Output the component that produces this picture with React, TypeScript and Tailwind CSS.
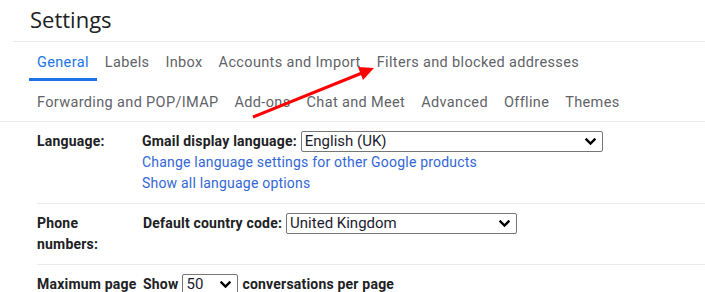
const Chevron = () => (
  <svg className="w-[11px] h-[8px]" viewBox="0 0 11 8" fill="none">
    <path d="M1.5 1.5 L5.5 5.5 L9.5 1.5" stroke="#000" strokeWidth={2.4} strokeLinecap="square" />
  </svg>
);

const FakeSelect = ({ value, width }: { value: string; width: string }) => (
  <div className={`${width} h-[21px] border border-[#767676] rounded-[2px] flex items-center justify-between pl-[3px] pr-[6px] text-[15px] tracking-normal text-[#1b1b2e] bg-white`}>
    <span className="leading-none">{value}</span>
    <Chevron />
  </div>
);

const row1 = ['General', 'Labels', 'Inbox', 'Accounts and Import', 'Filters and blocked addresses'];
const row2 = ['Forwarding and POP/IMAP', 'Add-ons', 'Chat and Meet', 'Advanced', 'Offline', 'Themes'];

export default function App() {
  return (
    <div className="relative w-[705px] h-[292px] overflow-hidden bg-white font-['Roboto',sans-serif] text-[14px] text-[#202124] tracking-[0.2px]">
      <div className="h-[41px] pl-[30px] pt-[4px] text-[22px] text-[#202124] font-['Open_Sans',sans-serif] leading-[30px] tracking-normal">
        Settings
      </div>
      <div className="ml-[13px] border-t border-[#e8e8e8]" />

      <div className="flex pl-[29px] h-[39px] text-[14.5px] tracking-[0.35px]">
        {row1.map((t, i) => (
          <div
            key={t}
            className={
              i === 0
                ? 'px-[8px] pt-[10px] text-[#1a73e8] border-b-[3px] border-[#1a73e8]'
                : 'px-[8px] pt-[10px] text-[#5f6368]'
            }
          >
            {t}
          </div>
        ))}
      </div>
      <div className="flex pl-[29px] h-[40px] pt-[11px] text-[14.5px] tracking-[0.35px]">
        {row2.map((t) => (
          <div key={t} className="px-[8px] text-[#5f6368]">
            {t}
          </div>
        ))}
      </div>
      <div className="border-t border-[#ebebeb]" />

      <div className="pl-[37px]">
        <div className="flex pt-[9px] h-[82px] border-b border-[#ebebeb]">
          <div className="w-[105px] font-bold leading-[21px]">Language:</div>
          <div className="flex flex-col">
            <div className="flex items-center gap-[4px]">
              <span className="font-bold">Gmail display language:</span>
              <FakeSelect value="English (UK)" width="w-[302px]" />
            </div>
            <div className="leading-[21px] text-[#3367d6]">Change language settings for other Google products</div>
            <div className="leading-[21px] text-[#3367d6]">Show all language options</div>
          </div>
        </div>

        <div className="flex pt-[9px] h-[61px] border-b border-[#ebebeb]">
          <div className="w-[106px] font-bold leading-[21px]">
            Phone
            <br />
            numbers:
          </div>
          <div className="flex items-start gap-[4px]">
            <span className="font-bold leading-[21px]">Default country code:</span>
            <FakeSelect value="United Kingdom" width="w-[231px]" />
          </div>
        </div>

        <div className="flex pt-[9px]">
          <div className="w-[106px] font-bold leading-[21px] whitespace-nowrap">Maximum page</div>
          <div className="flex items-start gap-[4px]">
            <span className="font-bold leading-[21px]">Show</span>
            <FakeSelect value="50" width="w-[56px]" />
            <span className="font-bold leading-[21px]">conversations per page</span>
          </div>
        </div>
      </div>

      <svg className="absolute left-0 top-0 pointer-events-none" width="705" height="292">
        <line x1="253" y1="117" x2="362" y2="73" stroke="#f00" strokeWidth={3} />
        <polygon points="374,68 358,67 363,80" fill="#f00" />
      </svg>
    </div>
  );
}
